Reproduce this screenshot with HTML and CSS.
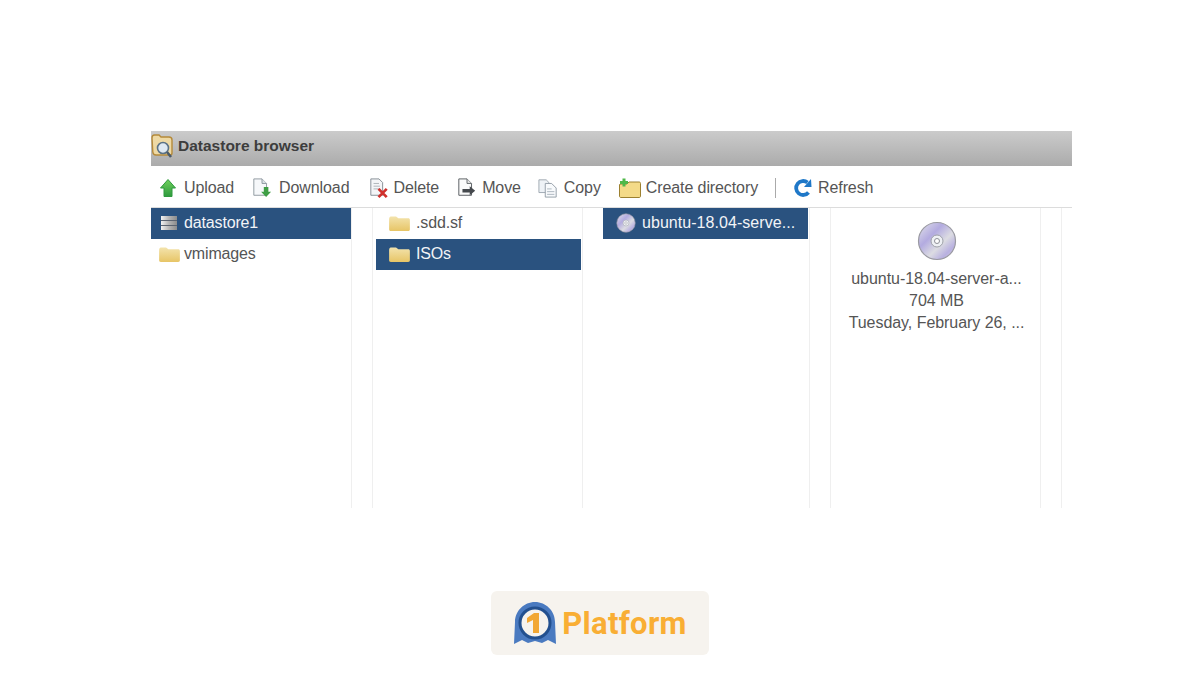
FILE: index.html
```html
<!DOCTYPE html>
<html lang="en">
<head>
    <meta charset="UTF-8">
    <meta name="viewport" content="width=device-width, initial-scale=1.0">
    <title>Datastore browser</title>
    <link rel="stylesheet" href="styles.css">
</head>
<body>
    <svg class="defs" width="0" height="0" aria-hidden="true">
        <defs>
            <linearGradient id="folder-fill" x1="0" y1="0" x2="0" y2="1">
                <stop offset="0" stop-color="#f3e3ac"/>
                <stop offset="1" stop-color="#e7c566"/>
            </linearGradient>
            <linearGradient id="disc-fill" x1="0" y1="0" x2="1" y2="1">
                <stop offset="0" stop-color="#e4e4ea"/>
                <stop offset="0.35" stop-color="#b3abe0"/>
                <stop offset="0.6" stop-color="#dcdce2"/>
                <stop offset="0.8" stop-color="#b8b0e0"/>
                <stop offset="1" stop-color="#e0e0e4"/>
            </linearGradient>
            <linearGradient id="stack-fill" x1="0" y1="0" x2="1" y2="0">
                <stop offset="0" stop-color="#f2f2f2"/>
                <stop offset="0.5" stop-color="#b4b4b4"/>
                <stop offset="1" stop-color="#8c8c8c"/>
            </linearGradient>
            <linearGradient id="arrow-fill" x1="0" y1="0" x2="0" y2="1">
                <stop offset="0" stop-color="#6fd05c"/>
                <stop offset="1" stop-color="#2f9a3e"/>
            </linearGradient>
            <symbol id="folder" viewBox="1 2 18 13">
                <path d="M1 4.500 C1 3 2 2.500 3 2.500 H7 L9 4 H17.500 C18.500 4 19 4.500 19 5.500 V13.500 C19 14.500 18.500 15 17.500 15 H2.500 C1.500 15 1 14.500 1 13.500 Z" fill="url(#folder-fill)"/>
            </symbol>
            <symbol id="disc" viewBox="0 0 40 40">
                <circle cx="20" cy="20" r="18.500" fill="url(#disc-fill)" stroke="#9a9aa2" stroke-width="1.200"/>
                <circle cx="20" cy="20" r="6" fill="#eef0f4" stroke="#9da0a8" stroke-width="1"/>
                <circle cx="20" cy="20" r="2.500" fill="#fff" stroke="#8e9098" stroke-width="1"/>
            </symbol>
        </defs>
    </svg>

    <div class="browser">
        <div class="title-bar">
            <svg class="title-icon" viewBox="0 0 22 26">
                <path d="M1 5 C1 3 2 2 3.500 2 H8 L10 4 H18 C20 4 21 5 21 7 V20 C21 21 20 22 19 22 H5 C3 22 2 21 1.800 19 Z" fill="#eed9a4" stroke="#b58a3a" stroke-width="1.400"/>
                <circle cx="12" cy="15" r="5.500" fill="#dfe9f2" stroke="#5b7286" stroke-width="1.600"/>
                <path d="M16 19 L20 24" stroke="#4b5a68" stroke-width="2.600"/>
            </svg>
            <span>Datastore browser</span>
        </div>

        <div class="toolbar">
            <div class="tool tool-upload">
                <svg class="tool-icon" viewBox="0 0 18 20"><path d="M9 1.500 L16.500 10 H13 V18.500 H5 V10 H1.500 Z" fill="url(#arrow-fill)" stroke="#2f9a3e" stroke-width="1" stroke-linejoin="round"/></svg>
                <span>Upload</span>
            </div>
            <div class="tool tool-download">
                <svg class="tool-icon" viewBox="0 0 22 22"><path d="M2 1 H11 L16 6 V19 H2 Z" fill="#f6f8fa" stroke="#8a949c" stroke-width="1"/><path d="M11 1 V6 H16" fill="#dde3e8" stroke="#8a949c" stroke-width="1"/><path d="M13 10 H18 V15 H21 L15.500 21 L10 15 H13 Z" fill="#3f9e45"/></svg>
                <span>Download</span>
            </div>
            <div class="tool tool-delete">
                <svg class="tool-icon" viewBox="0 0 22 22"><path d="M2 1 H11 L15 5 V19 H2 Z" fill="#f4f5f7" stroke="#7f8890" stroke-width="1"/><path d="M5 6 H11 M5 9 H12 M5 12 H12" stroke="#a9b0b6" stroke-width="1"/><path d="M10.500 12 L19.500 21 M19.500 12 L10.500 21" stroke="#d0312d" stroke-width="3"/></svg>
                <span>Delete</span>
            </div>
            <div class="tool tool-move">
                <svg class="tool-icon" viewBox="0 0 22 22"><path d="M2 1 H11 L16 6 V19 H2 Z" fill="#fafafa" stroke="#5f6468" stroke-width="1.100"/><path d="M11 1 V6 H16" fill="#e4e4e4" stroke="#5f6468" stroke-width="1"/><path d="M6 12 H14 V9 L20 14 L14 19 V16 H6 Z" fill="#45494d"/></svg>
                <span>Move</span>
            </div>
            <div class="tool tool-copy">
                <svg class="tool-icon" viewBox="0 0 22 22"><path d="M1 2 H9 L12 5 V16 H1 Z" fill="#eef2f6" stroke="#9aa5ae" stroke-width="1"/><path d="M8 6 H15 L20 11 V21 H8 Z" fill="#f8fafc" stroke="#8f9ba5" stroke-width="1"/><path d="M10 12 H15 M10 15 H18 M10 18 H18" stroke="#a8b3bc" stroke-width="1"/></svg>
                <span>Copy</span>
            </div>
            <div class="tool tool-create">
                <svg class="tool-icon" viewBox="0 0 22 20"><path d="M1 6 H8 L10 4 H20 C21 4 21.500 4.500 21.500 5.500 V18 C21.500 19 21 19.500 20 19.500 H2 C1 19.500 0.500 19 0.500 18 V7 Z" fill="#f4da88" stroke="#9c8030" stroke-width="1"/><path d="M3.500 0.500 H6.500 V3 H9 V6 H6.500 V8.500 H3.500 V6 H1 V3 H3.500 Z" fill="#4fb848"/></svg>
                <span>Create directory</span>
            </div>
            <div class="tool-sep"></div>
            <div class="tool tool-refresh">
                <svg class="tool-icon" viewBox="0 0 20 20"><path d="M15.500 14.500 A7 7 0 1 1 14.500 4.500" fill="none" stroke="#1f78c8" stroke-width="3.800"/><path d="M11 9 L18.500 9 L18 1 Z" fill="#1f78c8"/></svg>
                <span>Refresh</span>
            </div>
        </div>

        <div class="panes">
            <div class="pane pane-first">
                <div class="row selected">
                    <svg class="row-icon stack-icon" viewBox="0 0 18 16">
                        <rect x="1" y="1" width="16" height="14" fill="url(#stack-fill)"/>
                        <path d="M1 5.500 H17 M1 10.500 H17" stroke="#5c6470" stroke-width="1"/>
                    </svg>
                    <span>datastore1</span>
                </div>
                <div class="row">
                    <svg class="row-icon"><use href="#folder"/></svg>
                    <span>vmimages</span>
                </div>
            </div>
            <div class="pane pane-second">
                <div class="row">
                    <svg class="row-icon"><use href="#folder"/></svg>
                    <span>.sdd.sf</span>
                </div>
                <div class="row selected">
                    <svg class="row-icon"><use href="#folder"/></svg>
                    <span>ISOs</span>
                </div>
            </div>
            <div class="pane pane-third">
                <div class="row selected">
                    <svg class="row-icon"><use href="#disc"/></svg>
                    <span>ubuntu-18.04-serve...</span>
                </div>
            </div>
            <div class="pane pane-details">
                <svg class="details-icon"><use href="#disc"/></svg>
                <p>ubuntu-18.04-server-a...</p>
                <p>704 MB</p>
                <p>Tuesday, February 26, ...</p>
            </div>
            <div class="pane pane-empty"></div>
        </div>
    </div>

    <div class="logo-wrap">
        <div class="logo">
            <svg class="logo-mark" viewBox="0 0 44 46">
                <path d="M22 2 C33 2 42 11 42 22 L43 44 L35 40 L29 43 L22 41 L15 43 L9 40 L1 44 L2 22 C2 11 11 2 22 2 Z" fill="#4a7ac0"/>
                <circle cx="22" cy="23" r="15" fill="#f6f3ee" stroke="#23508f" stroke-width="3"/>
                <path d="M21 13 H26 V33 H20 V20 L14 23 V18 Z" fill="#f2a733"/>
            </svg>
            <span class="logo-text">Platform</span>
        </div>
    </div>
</body>
</html>
```

FILE: styles.css
```css
body {
    margin: 0;
    padding: 131px 0 0 151px;
    font-family: "Liberation Sans", Arial, sans-serif;
    font-size: 16px;
    color: #555;
    background-color: #fff;
}

.defs {
    position: absolute;
}

.browser {
    width: 921px;
}

.title-bar {
    display: flex;
    align-items: center;
    box-sizing: border-box;
    height: 35px;
    padding-bottom: 5px;
    background: linear-gradient(#cbcbcb, #ababab);
    font-size: 15.5px;
    font-weight: bold;
    color: #3d3d3d;
}

.title-icon {
    width: 22px;
    height: 26px;
    margin-right: 5px;
}

.toolbar {
    display: flex;
    align-items: center;
    box-sizing: border-box;
    height: 42px;
    padding: 2px 0 0 8px;
    border-bottom: 1px solid #dcdcdc;
}

.tool {
    display: flex;
    align-items: center;
    margin-right: 18px;
    letter-spacing: -0.1px;
}

.tool-icon {
    width: 20px;
    height: 22px;
    margin-right: 5px;
}

.tool-upload .tool-icon {
    width: 18px;
    margin-right: 7px;
}

.tool-download {
    margin-right: 20px;
}

.tool-download .tool-icon {
    margin-right: 7px;
}

.tool-delete .tool-icon {
    margin-right: 4px;
}

.tool-move {
    margin-right: 17px;
}

.tool-copy .tool-icon {
    margin-right: 6px;
}

.tool-create {
    margin-right: 17px;
}

.tool-create .tool-icon {
    width: 22px;
    margin-right: 5px;
}

.tool-refresh .tool-icon {
    margin-right: 5px;
}

.tool-sep {
    width: 1px;
    height: 20px;
    background-color: #aaa;
    margin-right: 17px;
}

.panes {
    display: flex;
    gap: 20px;
    height: 300px;
}

.pane {
    box-sizing: border-box;
    border-right: 1px solid #efefef;
}

.pane-first {
    width: 201px;
}

.pane-second {
    width: 211px;
    padding: 0 1px 0 3px;
    border-left: 1px solid #efefef;
}

.pane-third {
    width: 207px;
    padding-right: 1px;
}

.pane-details {
    width: 211px;
    padding: 13px 0 0 2px;
    text-align: center;
    border-left: 1px solid #efefef;
}

.pane-details p {
    margin: 0;
    line-height: 22px;
    letter-spacing: -0.05px;
}

.pane-empty {
    width: 11px;
    border-right: none;
    border-left: 1px solid #efefef;
}

.row {
    display: flex;
    align-items: center;
    box-sizing: border-box;
    height: 31px;
    padding: 0 0 1px 8px;
    letter-spacing: -0.15px;
}

.row.selected {
    background-color: #2a527f;
    color: #f2f4f7;
}

.row-icon {
    width: 21px;
    height: 15px;
    margin-right: 4px;
    flex-shrink: 0;
}

.stack-icon {
    width: 20px;
    height: 16px;
    margin-right: 5px;
}

.pane-second .row {
    padding-left: 13px;
}

.pane-second .row-icon {
    margin-right: 6px;
}

.pane-third .row {
    padding-left: 13px;
    letter-spacing: 0.05px;
}

.pane-third .row-icon {
    width: 20px;
    height: 20px;
    margin-right: 6px;
}

.details-icon {
    display: block;
    width: 40px;
    height: 40px;
    margin: 0 auto 7px;
}

.logo-wrap {
    display: flex;
    margin-top: 83px;
    margin-left: 340px;
}

.logo {
    display: flex;
    align-items: center;
    justify-content: center;
    width: 218px;
    height: 64px;
    background-color: #f6f3ee;
    border-radius: 6px;
}

.logo-mark {
    width: 44px;
    height: 46px;
    margin-right: 5px;
}

.logo-text {
    font-family: Roboto, "Liberation Sans", sans-serif;
    font-size: 31px;
    font-weight: 700;
    color: #f9ae34;
    letter-spacing: 0.3px;
}
```
